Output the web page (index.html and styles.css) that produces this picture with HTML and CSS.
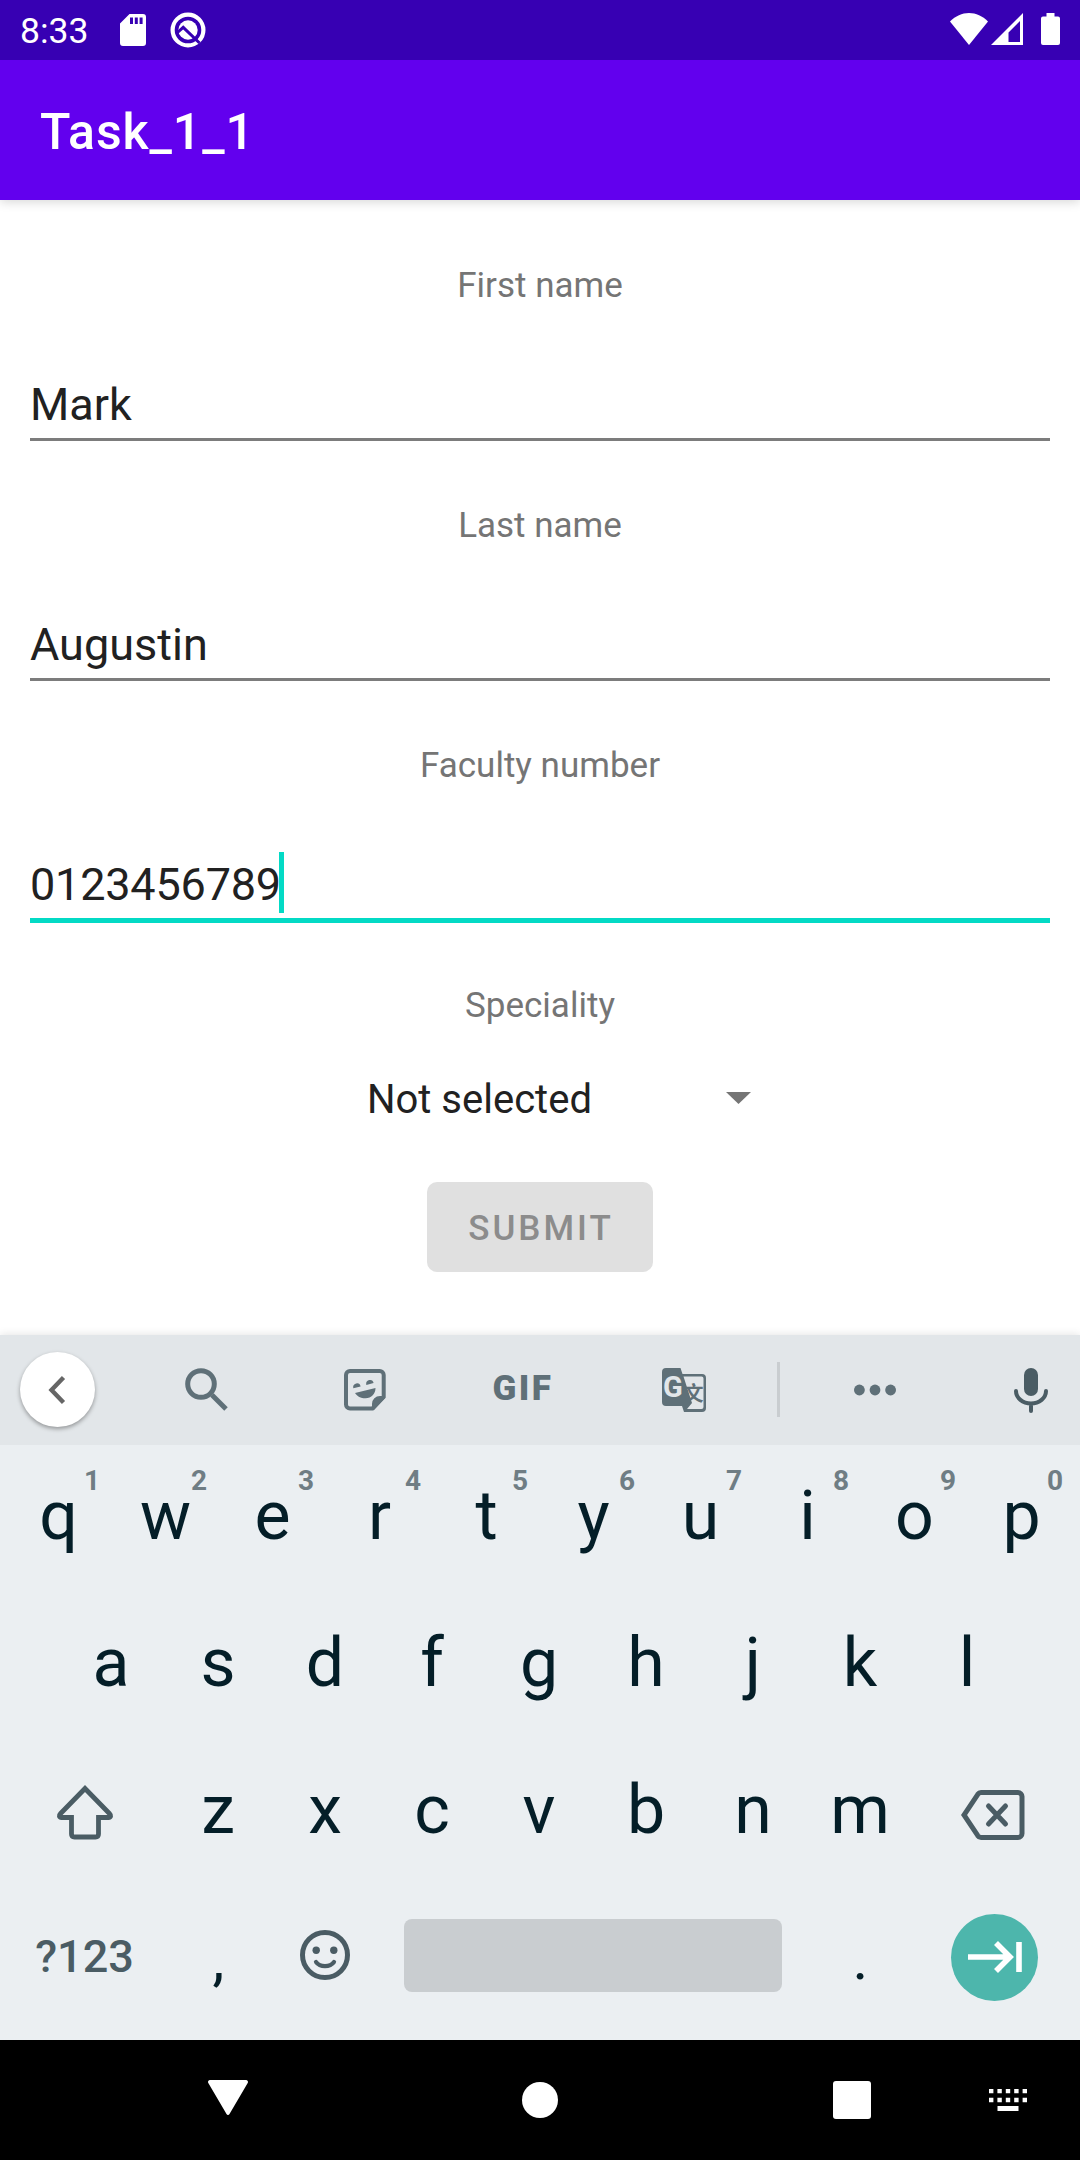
FILE: index.html
```html
<!DOCTYPE html>
<html lang="en">
<head>
<meta charset="utf-8">
<title>Task_1_1</title>
<link rel="stylesheet" href="styles.css">
</head>
<body>
<div class="screen">
  <header class="status">
    <span class="clock">8:33</span>
    <svg class="sd" width="26" height="32" viewBox="0 0 26 32"><path fill="#fff" fill-rule="evenodd" d="M9.500 0H23a3 3 0 0 1 3 3v26a3 3 0 0 1-3 3H3a3 3 0 0 1-3-3V9.500zM10 3.500v6.500h3V3.500zm4.800 0v6.500h3V3.500zm4.800 0v6.500h3V3.500z"/></svg>
    <svg class="q" width="36" height="36" viewBox="0 0 36 36"><circle cx="18" cy="18" r="15.400" fill="none" stroke="#fff" stroke-width="4.200"/><circle cx="18" cy="18" r="9.700" fill="#fff"/><path d="M7.500 20.500 13.200 15.300 29.500 31" fill="none" stroke="#3700b3" stroke-width="3"/></svg>
    <span class="spacer"></span>
    <svg class="wifi" width="38" height="32" viewBox="0 0 38 32"><path fill="#fff" d="M0 8.500C5.500 3 12 0 19 0s13.500 3 19 8.500L19 32z"/></svg>
    <svg class="signal" width="32" height="32" viewBox="0 0 32 32"><path fill="#fff" fill-rule="evenodd" d="M32 0v32H0zM29 8 17.500 19.500V29H29z"/></svg>
    <svg class="battery" width="19" height="32" viewBox="0 0 19 32"><path fill="#fff" d="M5.500 0h8v3.500H17a2 2 0 0 1 2 2V30a2 2 0 0 1-2 2H2a2 2 0 0 1-2-2V5.500a2 2 0 0 1 2-2h3.500z"/></svg>
  </header>
  <div class="appbar"><h1>Task_1_1</h1></div>

  <main class="form">
    <label class="label">First name</label>
    <div class="field">Mark</div>
    <label class="label">Last name</label>
    <div class="field">Augustin</div>
    <label class="label">Faculty number</label>
    <div class="field focused">0123456789<span class="cursor"></span></div>
    <label class="label">Speciality</label>
    <div class="spinner"><span>Not selected</span><svg width="25" height="12" viewBox="0 0 25 12"><path fill="#757575" d="M0 0h25L12.500 12z"/></svg></div>
    <button class="submit" disabled>SUBMIT</button>
  </main>

  <section class="keyboard">
    <div class="tools">
      <div class="back"><svg width="18" height="30" viewBox="0 0 18 30"><path d="M15.500 2.500 3.500 15l12 12.500" fill="none" stroke="#666" stroke-width="4.400"/></svg></div>
      <svg width="43" height="43" viewBox="0 0 43 43"><g fill="none" stroke="#5f7078" stroke-width="5"><circle cx="16" cy="16" r="13.300"/><path d="M27 27 41 41"/></g></svg>
      <svg width="42" height="42" viewBox="0 0 42 42"><path d="M39.700 28V6a4 4 0 0 0-4-4H6a4 4 0 0 0-4 4v29.500a4 4 0 0 0 4 4h22.500z" fill="none" stroke="#5f7078" stroke-width="4"/><path fill="#5f7078" d="M28 40v-5a8 8 0 0 1 8-8h5v2L30 41zM11 24 31.500 19c0 6-4 10.200-10 10.200-5 0-8-1.500-10.500-5.200zM9.300 19.300a3.700 4 0 1 1 7.300-1.800zM22.300 15.900a3.700 4 0 1 1 7.300-1.800z"/></svg>
      <span class="gif">GIF</span>
      <svg width="44" height="44" viewBox="0 0 44 44"><path fill="#5f7078" d="M4 0h14.500l2 6H40a4 4 0 0 1 4 4v30a4 4 0 0 1-4 4H22l-2-6H4a4 4 0 0 1-4-4V4a4 4 0 0 1 4-4z"/><path fill="#e2e6e9" d="M21.500 8.500H39.500a2 2 0 0 1 2 2V39a2 2 0 0 1-2 2H25l5-6z"/><text x="1" y="29" class="tr-g">G</text><text x="21.500" y="33" class="tr-wen">文</text></svg>
      <i class="divider"></i>
      <svg width="42" height="12" viewBox="0 0 42 12" fill="#5f7078"><circle cx="5.400" cy="6" r="5.400"/><circle cx="21" cy="6" r="5.400"/><circle cx="36.600" cy="6" r="5.400"/></svg>
      <svg class="mic" width="34" height="46" viewBox="0 0 34 46"><rect x="10" y="1" width="14" height="28" rx="7" fill="#4a5c64"/><path d="M2 24a15 12.500 0 0 0 30 0M17 37v7" fill="none" stroke="#4a5c64" stroke-width="4" stroke-linecap="round"/></svg>
    </div>
    <div class="row top">
      <div class="key">q<sup>1</sup></div><div class="key">w<sup>2</sup></div><div class="key">e<sup>3</sup></div><div class="key">r<sup>4</sup></div><div class="key">t<sup>5</sup></div><div class="key">y<sup>6</sup></div><div class="key">u<sup>7</sup></div><div class="key">i<sup>8</sup></div><div class="key">o<sup>9</sup></div><div class="key">p<sup>0</sup></div>
    </div>
    <div class="row">
      <div class="key">a</div><div class="key">s</div><div class="key">d</div><div class="key">f</div><div class="key">g</div><div class="key">h</div><div class="key">j</div><div class="key">k</div><div class="key">l</div>
    </div>
    <div class="row">
      <div class="key wide shift"><svg width="58" height="56" viewBox="0 0 58 56"><path d="M29 4.500 4.600 29.500c-2 2-1.600 4 1 4H15.500V50c0 2 1 3 3 3h21c2 0 3-1 3-3V33.500h9.900c2.600 0 3-2 1-4z" fill="none" stroke="#4a5c64" stroke-width="4.800"/></svg></div>
      <div class="key">z</div><div class="key">x</div><div class="key">c</div><div class="key">v</div><div class="key">b</div><div class="key">n</div><div class="key">m</div>
      <div class="key wide delete"><svg width="64" height="50" viewBox="0 0 64 50"><path d="M20 2.500h37a4 4 0 0 1 4 4v37a4 4 0 0 1-4 4H20c-1.500 0-2.500-.8-3.200-1.800L3 25 16.800 4.300c.7-1 1.700-1.800 3.200-1.800z" fill="none" stroke="#4a5c64" stroke-width="5"/><path d="m27.500 16 17 18m0-18-17 18" stroke="#4a5c64" stroke-width="5" stroke-linecap="round"/></svg></div>
    </div>
    <div class="row bottom">
      <div class="key wide symbols">?123</div>
      <div class="key punct">,</div>
      <div class="key emoji"><svg width="50" height="50" viewBox="0 0 50 50"><circle cx="25" cy="25" r="22.500" fill="none" stroke="#4a5c64" stroke-width="5"/><circle cx="16.200" cy="20.300" r="3.700" fill="#4a5c64"/><circle cx="33.800" cy="20.300" r="3.700" fill="#4a5c64"/><path d="M16 32c4 5.500 14 5.500 18 0" fill="none" stroke="#4a5c64" stroke-width="4.200" stroke-linecap="round"/></svg></div>
      <div class="space"></div>
      <div class="key punct">.</div>
      <div class="key wide"><div class="enter"><svg width="54" height="32" viewBox="0 0 54 32"><path d="M0 16h42M28 2l14 14-14 14M51 1v30" fill="none" stroke="#fff" stroke-width="5.600"/></svg></div></div>
    </div>
  </section>

  <nav class="nav">
    <svg width="40" height="36" viewBox="0 0 40 36"><path fill="#fff" d="M2 0h36a2 2 0 0 1 1.700 3L21.500 34a1.700 1.700 0 0 1-3 0L.3 3A2 2 0 0 1 2 0z"/></svg>
    <i class="home"></i>
    <i class="recent"></i>
    <svg class="ime" width="38" height="22" viewBox="0 0 38 22"><path d="M0 2h38M0 11h38" stroke="#fff" stroke-width="4.400" stroke-dasharray="4.400 4"/><path d="M8.500 19.500h21" stroke="#fff" stroke-width="5"/></svg>
  </nav>
</div>
</body>
</html>
```
FILE: styles.css
```css
* { box-sizing: border-box; }
body { margin: 0; font-family: Roboto, "Liberation Sans", sans-serif; }
svg { display: block; flex: none; }
.screen { width: 1080px; height: 2160px; display: flex; flex-direction: column; background: #fff; overflow: hidden; }

.status { height: 60px; flex: none; display: flex; align-items: flex-start; padding: 0 20px; background: #3700b3; color: #fff; }
.clock { width: 100px; font-size: 35.5px; line-height: 62px; }
.sd { margin-top: 14px; }
.q { margin: 12px 0 0 24px; }
.spacer { flex: 1; }
.wifi, .signal, .battery { margin-top: 13px; }
.signal { margin-left: 3px; }
.battery { margin-left: 18px; }

.appbar { height: 140px; flex: none; display: flex; align-items: center; padding-left: 40px; background: #6200ee; color: #fff; box-shadow: 0 2px 10px rgba(0, 0, 0, .16); clip-path: inset(0 0 -20px 0); }
h1 { margin: 0; font-size: 50px; font-weight: 500; line-height: 60px; padding-top: 3px; letter-spacing: .9px; }

.form { height: 1135px; flex: none; display: flex; flex-direction: column; align-items: center; padding-top: 60px; }
.label { height: 50px; line-height: 52px; font-size: 35px; color: #757575; }
.field { width: 1020px; height: 131px; margin-bottom: 59px; padding-top: 64px; font-size: 45px; line-height: 61px; color: #212121; display: flex; border-bottom: 3px solid #7c7c7c; }
.focused { height: 133px; margin-bottom: 57px; border-bottom: 5px solid #03dac5; letter-spacing: -.2px; }
.cursor { width: 5px; height: 61px; margin: -2px 0 0 -2px; background: #03dac5; }
.spinner { width: 384px; height: 60px; margin: 39px 0 53px 38px; display: flex; align-items: center; justify-content: space-between; font-size: 40px; color: #212121; }
.spinner svg { margin-top: -2px; }
.submit { width: 226px; height: 90px; border: 0; border-radius: 10px; background: #e0e0e0; color: #8c8c8c; font: 500 35px Roboto, sans-serif; letter-spacing: 3px; padding: 2px 0 0 2px; }

.keyboard { height: 705px; flex: none; background: #ebeff2; color: #041e28; box-shadow: 0 -1px 8px rgba(0, 0, 0, .1); }
.tools { height: 110px; padding-bottom: 1px; display: grid; grid-template-columns: 115px 183px 133px 182px 142px 47px 146px 33px 99px; align-items: center; justify-items: center; background: #e2e6e9; }
.back { width: 75px; height: 75px; border-radius: 50%; background: #fff; display: flex; align-items: center; justify-content: center; box-shadow: 0 2px 4px rgba(0, 0, 0, .35); }
.back svg { margin-right: 2px; }
.gif { font-size: 35px; font-weight: 900; line-height: 34px; letter-spacing: 2.400px; padding: 0 0 2px 2px; color: #5f7078; }
.tr-g { font: 700 29px Roboto, sans-serif; fill: #e2e6e9; }
.tr-wen { font: 700 20px "Noto Sans CJK SC", sans-serif; fill: #5f7078; }
.divider { width: 3px; height: 55px; background: #c9cdd0; }
.mic { grid-column: 9; }

.row { height: 147px; display: flex; justify-content: center; padding-right: 2px; }
.top { height: 146px; padding-right: 0; }
.key { position: relative; width: 107px; height: 147px; flex: none; display: flex; justify-content: center; font-size: 68px; line-height: 144px; }
.top .key { line-height: 142px; }
sup { position: absolute; top: 21px; left: 72px; width: 30px; text-align: center; font-size: 28px; font-weight: 700; line-height: 30px; color: #6f7d84; }
.wide { width: 160px; align-items: center; }
.shift svg { margin-top: 1px; }
.delete svg { margin: 7px 1px 0 0; }
.symbols { font-size: 45px; font-weight: 500; line-height: 139px; color: #4a5c64; align-items: flex-start; padding-top: 2px; }
.punct { font-size: 60px; line-height: 147px; padding-left: 1px; }
.emoji { padding-top: 45px; }
.bottom { height: 155px; }
.space { width: 378px; height: 73px; flex: none; margin: 34px 25px 0 25px; border-radius: 8px; background: #c9cdd0; }
.enter { width: 87px; height: 87px; margin: -3px 0 0 2px; border-radius: 50%; background: #4db6ac; display: flex; align-items: center; justify-content: center; }

.nav { height: 120px; flex: none; background: #000; display: flex; align-items: center; padding-left: 208px; }
.nav > svg:first-child { margin-top: -4px; }
.home { width: 36px; height: 36px; margin-left: 274px; border-radius: 50%; background: #fff; }
.recent { width: 38px; height: 38px; margin-left: 275px; border-radius: 3px; background: #fff; }
.ime { margin-left: 118px; }
```
